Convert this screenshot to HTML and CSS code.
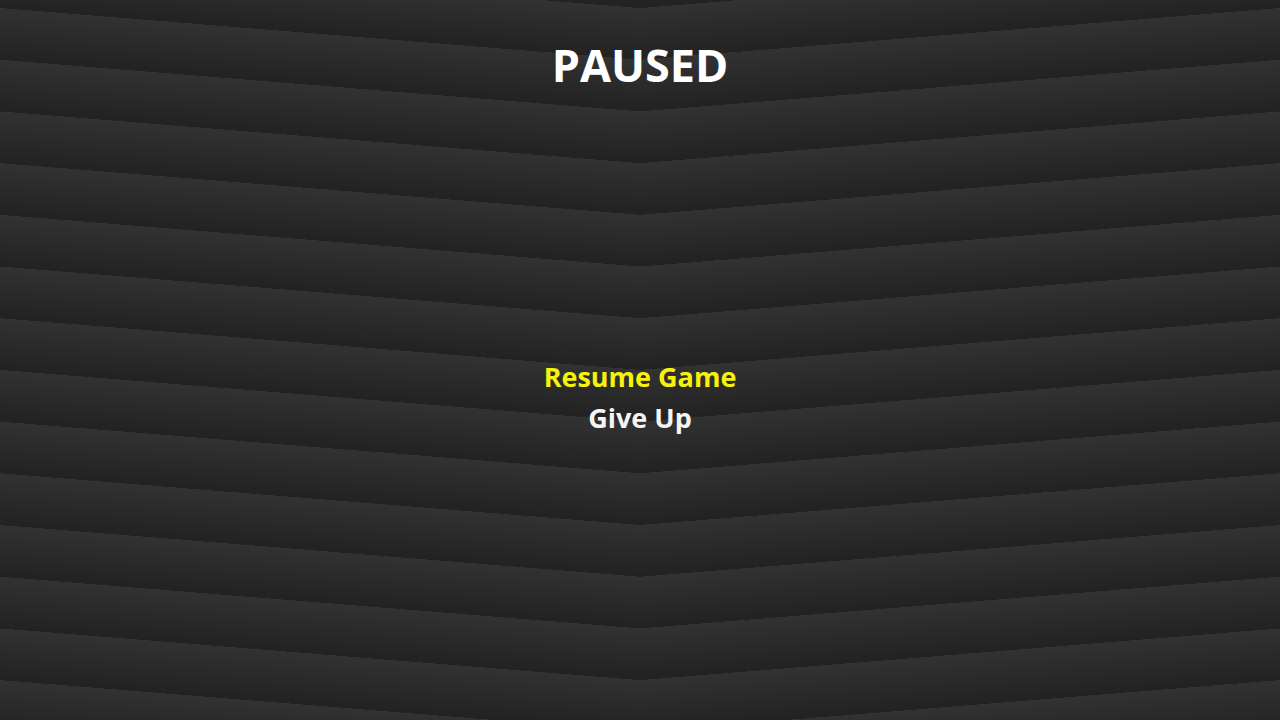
FILE: index.html
```html
<!DOCTYPE html>
<html lang="en">
<head>
    <meta charset="UTF-8">
    <meta name="viewport" content="width=device-width, initial-scale=1.0">
    <title>Paused</title>
    <link rel="stylesheet" href="styles.css">
</head>
<body>
    <div class="pause-screen">
        <h1 class="pause-title">PAUSED</h1>
        <ul class="pause-menu">
            <li class="menu-item selected">Resume Game</li>
            <li class="menu-item">Give Up</li>
        </ul>
    </div>
</body>
</html>
```

FILE: styles.css
```css
* {
    margin: 0;
    padding: 0;
    box-sizing: border-box;
}

html,
body {
    height: 100%;
}

body {
    font-family: 'Open Sans', 'DejaVu Sans', sans-serif;
    background-color: #2a2a2a;
    /* chevron stripes, mirrored at the middle */
    background-image:
        repeating-linear-gradient(184.62deg, #323232 8px, #2b2b2b 30px, #222222 59.53px),
        repeating-linear-gradient(175.38deg, #323232 8px, #2b2b2b 30px, #222222 59.53px);
    background-size: 50% 100%, 50% 100%;
    background-position: left top, right top;
    background-repeat: no-repeat;
    overflow: hidden;
}

.pause-screen {
    display: flex;
    flex-direction: column;
    align-items: center;
    height: 100vh;
}

.pause-title {
    padding-top: 42px;
    color: #ffffff;
    font-size: 45px;
    font-weight: 700;
    line-height: 1;
}

.pause-menu {
    list-style: none;
    margin-top: 269px;
    text-align: center;
}

.menu-item {
    color: #f4f4f4;
    font-size: 27px;
    font-weight: 700;
    line-height: 41px;
    cursor: pointer;
}

.menu-item.selected {
    color: #f6f20c;
}
```
